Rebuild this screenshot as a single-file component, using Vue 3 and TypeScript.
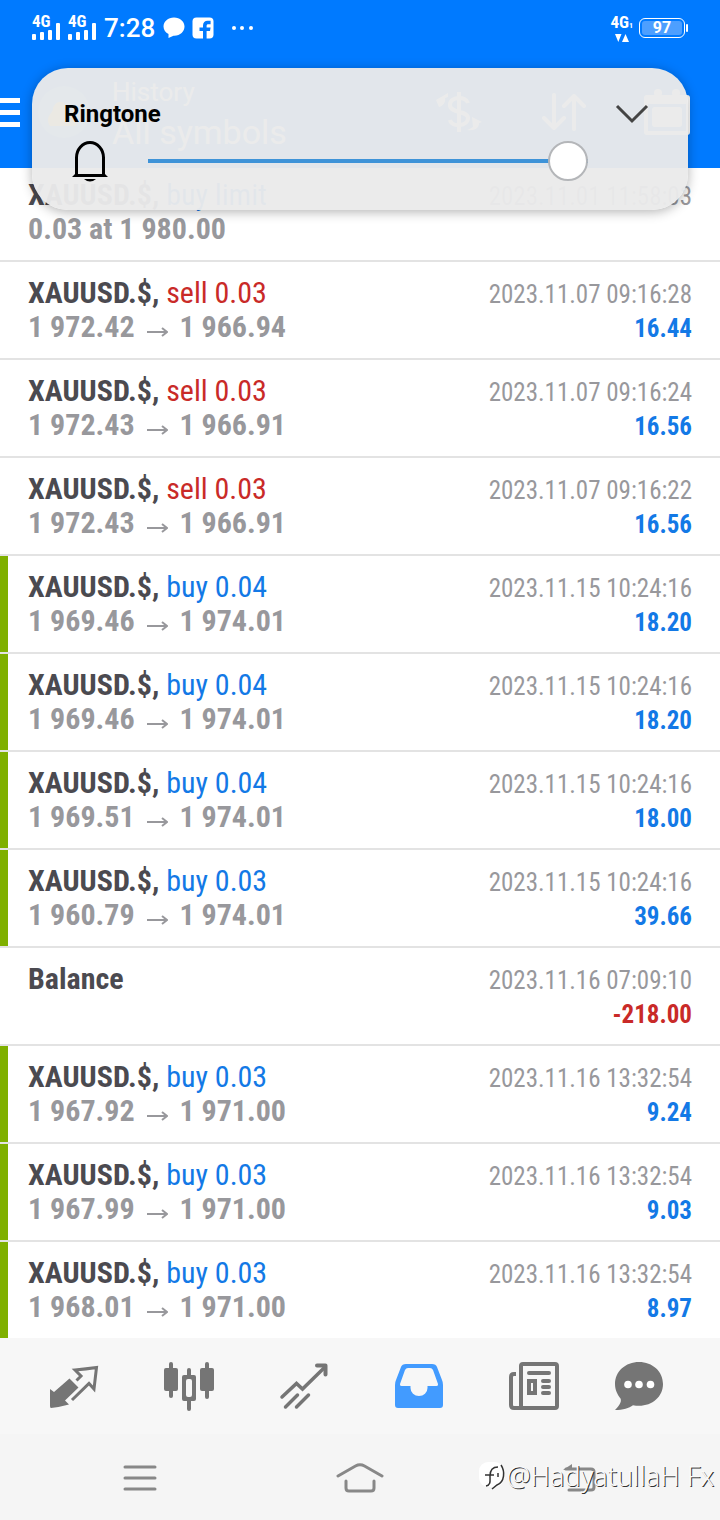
<script setup lang="ts">
import { ref } from 'vue'

interface Deal {
  symbol: string
  side?: 'buy' | 'sell'
  action?: string
  open?: string
  close?: string
  note?: string
  time: string
  profit?: string
  marked?: boolean
}

const volume = ref<number>(100)

function trade(side: 'buy' | 'sell', lots: string, open: string, close: string, time: string, profit: string): Deal {
  return { symbol: 'XAUUSD.$,', side, action: `${side} ${lots}`, open, close, time, profit, marked: side === 'buy' }
}

const deals: Deal[] = [
  { symbol: 'XAUUSD.$,', side: 'buy', action: 'buy limit', note: '0.03 at 1 980.00', time: '2023.11.01 11:58:03' },
  trade('sell', '0.03', '1 972.42', '1 966.94', '2023.11.07 09:16:28', '16.44'),
  trade('sell', '0.03', '1 972.43', '1 966.91', '2023.11.07 09:16:24', '16.56'),
  trade('sell', '0.03', '1 972.43', '1 966.91', '2023.11.07 09:16:22', '16.56'),
  trade('buy', '0.04', '1 969.46', '1 974.01', '2023.11.15 10:24:16', '18.20'),
  trade('buy', '0.04', '1 969.46', '1 974.01', '2023.11.15 10:24:16', '18.20'),
  trade('buy', '0.04', '1 969.51', '1 974.01', '2023.11.15 10:24:16', '18.00'),
  trade('buy', '0.03', '1 960.79', '1 974.01', '2023.11.15 10:24:16', '39.66'),
  { symbol: 'Balance', time: '2023.11.16 07:09:10', profit: '-218.00' },
  trade('buy', '0.03', '1 967.92', '1 971.00', '2023.11.16 13:32:54', '9.24'),
  trade('buy', '0.03', '1 967.99', '1 971.00', '2023.11.16 13:32:54', '9.03'),
  trade('buy', '0.03', '1 968.01', '1 971.00', '2023.11.16 13:32:54', '8.97'),
]
</script>

<template>
  <div class="screen">
    <header class="top">
      <div class="status">
        <div v-for="n in 2" :key="n" class="signal">
          <span class="net">4G</span>
          <svg width="28" height="18" viewBox="0 0 28 18" fill="#fff" aria-hidden="true">
            <rect x="0" y="12" width="4" height="6" rx="1" /><rect x="8" y="10" width="4" height="8" rx="1" />
            <rect x="16" y="8" width="4" height="10" rx="1" /><rect x="24" y="1" width="4" height="17" rx="1" />
          </svg>
        </div>
        <span class="clock">7:28</span>
        <svg class="chat" width="22" height="22" viewBox="0 0 22 22" fill="#fff" aria-hidden="true">
          <path d="M11 .5C5 .5.5 4.500.5 9.600c0 3.300 2 6 5 7.500L5.500 21l5-2.300c6.500.4 11-3.800 11-9.100C21.500 4.500 17 .5 11 .5z" />
        </svg>
        <svg class="fb" width="22" height="22" viewBox="0 0 22 22" aria-hidden="true">
          <rect x=".5" y=".5" width="21" height="21" rx="4" fill="#fff" />
          <path d="M11 22V14H7.500v-3.600H11V8.600c0-3.300 1.800-4.800 4.600-4.800h3v3.500h-2.300c-1.200 0-1.700.5-1.700 1.600v1.500h4L18 14h-3.400v8z" fill="#007aff" />
        </svg>
        <svg width="24" height="6" viewBox="0 0 24 6" fill="#fff" aria-hidden="true">
          <circle cx="4" cy="3" r="2" /><circle cx="12" cy="3" r="2" /><circle cx="21" cy="3" r="2" />
        </svg>
        <div class="data">
          <span class="net">4G<small>1</small></span>
          <svg width="16" height="8" viewBox="0 0 16 8" fill="#fff" aria-hidden="true"><path d="M1 0h6.500L4.300 8zM8 8h7L11.500 0z" /></svg>
        </div>
        <div class="battery"><span>97</span></div>
      </div>

      <div class="bar">
        <button class="menu" aria-label="Menu">
          <svg width="20" height="30" viewBox="0 0 20 30" fill="#fff"><path d="M0 1h20v5H0zM0 13h20v5H0zM0 25h20v5H0z" /></svg>
        </button>
        <svg class="coins" width="56" height="56" viewBox="0 0 56 56" aria-hidden="true">
          <circle cx="28" cy="28" r="26" fill="#3aa0f0" />
          <path d="M14 42c-6-10 4-13 3-18 3-8 10-8 13-2 2 6 12 10 10 20z" fill="#ffc928" />
        </svg>
        <div class="titles">
          <p>History</p>
          <h1>All symbols</h1>
        </div>
        <button class="tool dollar" aria-label="Currency">
          <svg width="50" height="44" viewBox="0 0 50 44" fill="none" stroke="#fff" stroke-width="4">
            <path d="M34 13c-2-7-18-7-18 2s18 5 18 13-16 10-18 2M25 2v40" />
            <path d="M2 10 14 3v4l-3 1c1 4-2 8-6 9zM48 32l-10-5 1 10c-2 1-3 2-6 3 8 1 12-2 12-7z" fill="#fff" stroke="none" />
          </svg>
        </button>
        <button class="tool sort" aria-label="Sort">
          <svg width="44" height="40" viewBox="0 0 44 40" fill="none" stroke="#fff" stroke-width="4" stroke-linecap="round" stroke-linejoin="round">
            <path d="M12 3v32M2 26l10 10 10-10M32 37V4M22 14 32 4l10 10" />
          </svg>
        </button>
        <button class="tool" aria-label="Period">
          <svg width="46" height="46" viewBox="0 0 46 46">
            <path d="M3 6h40a3 3 0 0 1 3 3v34a3 3 0 0 1-3 3H3a3 3 0 0 1-3-3V9a3 3 0 0 1 3-3zm1 9v27h38V15z" fill="#fff" fill-rule="evenodd" />
            <rect x="8" y="18" width="30" height="20" rx="3" fill="#fff" />
            <circle cx="14" cy="4" r="4" fill="#fff" /><circle cx="32" cy="4" r="4" fill="#fff" />
          </svg>
        </button>
      </div>
    </header>

    <main class="list">
      <article v-for="(d, i) in deals" :key="i" class="deal" :class="{ marked: d.marked }">
        <div class="line">
          <span><b class="symbol">{{ d.symbol }}</b><span v-if="d.action" class="action" :class="d.side">{{ ' ' + d.action }}</span></span>
          <time>{{ d.time }}</time>
        </div>
        <div class="line">
          <span v-if="d.note" class="price">{{ d.note }}</span>
          <span v-else-if="d.open" class="price">{{ d.open }}
            <svg class="arrow" width="21" height="12" viewBox="0 0 21 12" fill="none" stroke="#98989c" stroke-width="2" role="img" aria-label="to"><path d="M0 7h19M15 3l5 4-5 4" /></svg>
            {{ d.close }}</span>
          <span v-else>&nbsp;</span>
          <b v-if="d.profit" class="profit" :class="{ loss: d.profit.startsWith('-') }">{{ d.profit }}</b>
        </div>
      </article>
    </main>

    <nav class="tabs" aria-label="Sections">
      <button aria-label="Quotes">
        <svg width="50" height="50" viewBox="0 0 50 50">
          <path d="M1 28l4 3L20.500 17.500l9 9L16 39.500l4 4Q11 46 2 47q-1 0-1-2z" fill="#757575" />
          <path d="M27.500 19.500l4.500-4.500-6-6Q37 8 47.500 6.500L45 28l-5-5.500L23 39" fill="none" stroke="#757575" stroke-width="3" />
        </svg>
      </button>
      <button aria-label="Charts">
        <svg width="50" height="50" viewBox="0 0 50 50" fill="#757575">
          <rect x="0" y="7" width="14" height="23" rx="2" /><rect x="5" y="1" width="4" height="36" rx="2" />
          <rect x="36" y="7" width="14" height="23" rx="2" /><rect x="41" y="1" width="4" height="37" rx="2" />
          <path d="M20 14h3V9q0-2 2-2t2 2v5h3q2 0 2 2v22q0 2-2 2h-3v8q0 2-2 2t-2-2v-8h-3q-2 0-2-2V16q0-2 2-2zm4 4q-2 0-2 2v14q0 2 2 2h2q2 0 2-2V20q0-2-2-2z" fill-rule="evenodd" />
        </svg>
      </button>
      <button aria-label="Trade">
        <svg width="50" height="50" viewBox="0 0 50 50" fill="none" stroke="#757575" stroke-width="3.500" stroke-linecap="round">
          <path d="M3 36 17.500 22.500l6 5.500L45 7" /><path d="M38 4.500h8.500v9" stroke-width="4" stroke-linejoin="round" />
          <path d="M6.500 46l12-12M17.500 46l12-12" />
        </svg>
      </button>
      <button class="active" aria-label="History" aria-current="page">
        <svg width="48" height="44" viewBox="0 0 48 44" fill="#429bff">
          <path d="M11 0h26q4 0 5 3l5 13q1 2 1 5v20q0 3-3 3H3q-3 0-3-3V21q0-3 1-5L6 3q1-3 5-3zm2 4q-2 0-3 2L5 20q-.5 2 1.500 2H15.500v2a8.500 8 0 0 0 17 0v-2H41.500q2 0 1.500-2L38 6q-1-2-3-2z" fill-rule="evenodd" />
        </svg>
      </button>
      <button aria-label="News">
        <svg width="50" height="50" viewBox="0 0 50 50" fill="none" stroke="#757575" stroke-width="4">
          <rect x="12" y="3" width="36" height="44" rx="2" />
          <path d="M7 13H5q-3 0-3 3v28q0 3 3 3h9" />
          <path d="M20 12h20M34 20h6M34 26h6M34 32h6" stroke-linecap="round" />
          <rect x="20" y="20" width="6" height="12" />
        </svg>
      </button>
      <button aria-label="Messages">
        <svg width="48" height="50" viewBox="0 0 48 50">
          <path d="M24 1C10.500 1 0 10.500 0 23c0 6 2.500 10.500 5.500 14.500C7 41 4 45 0 49c8 0 14-2 18-4.800 2 .5 4 .6 6 .6 13.500 0 24-9.300 24-21.800S37.500 1 24 1z" fill="#757575" />
          <g fill="#fff"><circle cx="13" cy="23.500" r="3.800" /><circle cx="24" cy="23.500" r="3.800" /><circle cx="35.500" cy="23.500" r="3.800" /></g>
        </svg>
      </button>
    </nav>

    <footer class="system">
      <button aria-label="Recent apps">
        <svg width="34" height="28" viewBox="0 0 34 28" stroke="#888" stroke-width="3" stroke-linecap="round"><path d="M2 4h30M2 15h30M2 26h30" /></svg>
      </button>
      <button aria-label="Home">
        <svg width="48" height="32" viewBox="0 0 48 32" fill="none" stroke="#888" stroke-width="3" stroke-linecap="round">
          <path d="M2 15 19.500 5Q24 2.500 28.500 5L46 15" /><path d="M10 20v7q0 3 3 3h22q3 0 3-3v-7" />
        </svg>
      </button>
      <button aria-label="Back">
        <svg width="40" height="32" viewBox="0 0 40 32" fill="none" stroke="#888" stroke-width="3" stroke-linecap="round">
          <path d="M6 8h25q3 0 3 3v15q0 3-3 3H9" /><path d="M12 3v6H3z" fill="#888" stroke="none" />
        </svg>
      </button>
      <div class="credit">
        <svg width="28" height="30" viewBox="0 0 28 30" aria-hidden="true">
          <rect x="0" y="1" width="25" height="25" rx="9" fill="#fff" />
          <path d="M7 25c5-1 4-5 4-10 0-6 2-9 8-9M6 14h9M19 12v4" fill="none" stroke="#333" stroke-width="1.500" />
          <path d="M22 4c4 6 4 17-4 20l-5 4" fill="none" stroke="#333" stroke-width="1.500" />
        </svg>
        <span>@HadyatullaH Fx</span>
      </div>
    </footer>

    <section class="panel">
      <div class="panel-head">
        <label for="ringtone">Ringtone</label>
        <button aria-label="Expand">
          <svg width="34" height="22" viewBox="0 0 34 22" fill="none" stroke="#444" stroke-width="3"><path d="M2 3l15 15L32 3" /></svg>
        </button>
      </div>
      <div class="panel-body">
        <svg width="36" height="42" viewBox="0 0 36 42" aria-hidden="true">
          <path d="M4.500 35V17.500a13.500 15 0 0 1 27 0V35" fill="none" stroke="#000" stroke-width="3" />
          <path d="M0 37l3-3h30l3 3zM12 39h12q-6 5-12 0z" />
        </svg>
        <input id="ringtone" v-model.number="volume" type="range" min="0" max="100" />
      </div>
    </section>
  </div>
</template>

<style>
body {
  background: #f6f6f6;
}
</style>

<style scoped>
.screen {
  position: relative;
  display: flex;
  flex-direction: column;
  min-height: 100vh;
  background: #f6f6f6;
  font-family: "Roboto Condensed", "Liberation Sans Narrow", Roboto, sans-serif;
}
button {
  display: grid;
  place-items: center;
  padding: 0;
  border: 0;
  background: none;
}
svg {
  display: block;
  flex: none;
}
.top {
  background: #007aff;
  color: #fff;
}
.status {
  display: flex;
  align-items: center;
  height: 56px;
  padding: 0 35px 0 32px;
  font-family: Roboto, sans-serif;
  font-weight: 500;
}
.signal {
  position: relative;
  padding-top: 6px;
  margin-right: 8px;
}
.net {
  font-family: "Roboto Condensed", Roboto, sans-serif;
  font-size: 17px;
  font-weight: 700;
  line-height: 16px;
}
.signal .net {
  position: absolute;
  top: -3px;
  left: 0;
}
.clock {
  font-size: 26px;
}
.chat {
  margin-left: 8px;
}
.fb {
  margin: 0 16px 0 7px;
}
.data {
  display: flex;
  flex-direction: column;
  align-items: center;
  margin-left: auto;
  margin-right: 6px;
}
.data small {
  font-size: 8px;
}
.battery {
  position: relative;
  box-sizing: border-box;
  width: 46px;
  height: 20px;
  padding: 2px;
  border: 1px solid #fff;
  border-radius: 6px;
}
.battery span {
  display: block;
  border-radius: 3px;
  background: #4d9fff;
  font-size: 16px;
  font-weight: 700;
  line-height: 14px;
  text-align: center;
}
.battery::after {
  content: "";
  position: absolute;
  top: 5px;
  right: -4px;
  width: 2px;
  height: 8px;
  border-radius: 1px;
  background: #fff;
}
.bar {
  display: flex;
  align-items: center;
  height: 112px;
  padding-right: 30px;
  font-family: Roboto, sans-serif;
}
.coins {
  margin: 0 20px 0 16px;
}
.titles {
  flex: 1;
}
.titles p {
  margin: 0;
  font-size: 26px;
  line-height: 40px;
}
.titles h1 {
  margin: 0;
  font-size: 34px;
  font-weight: 400;
  line-height: 40px;
}
.dollar {
  margin-right: 58px;
}
.sort {
  margin-right: 58px;
}
.list {
  background: #fff;
}
.deal {
  box-sizing: border-box;
  padding: 14px 28px;
  border-bottom: 2px solid #e3e3e3;
}
.deal:first-child {
  padding-top: 10px;
}
.deal:last-child {
  border-bottom: 0;
}
.marked {
  background: linear-gradient(#7fb000, #7fb000) left / 8px 100% no-repeat padding-box;
}
.line {
  display: flex;
  justify-content: space-between;
  align-items: baseline;
  height: 34px;
  font-size: 30px;
  line-height: 34px;
  white-space: nowrap;
}
.symbol {
  color: #4b4a50;
}
.action {
  white-space: pre;
}
.buy {
  color: #1379e6;
}
.sell {
  color: #c92a28;
}
.price {
  color: #98989c;
  font-weight: 700;
}
.arrow {
  display: inline-block;
  margin: 0 5px;
}
time {
  color: #98989c;
  font-size: 25px;
}
.profit {
  color: #1379e6;
  font-size: 25px;
}
.profit.loss {
  color: #c92a28;
}
.tabs {
  display: grid;
  grid-template-columns: repeat(5, 115fr) 96fr;
  height: 96px;
  padding: 0 33px 0 16px;
  background: #f7f7f7;
}
.system {
  position: relative;
  display: grid;
  grid-template-columns: repeat(3, 1fr);
  height: 86px;
  padding: 0 30px;
  background: #f5f5f5;
}
.credit {
  position: absolute;
  right: 6px;
  top: 26px;
  display: flex;
  align-items: center;
  color: #fafafa;
  font-family: "Noto Sans", sans-serif;
  font-size: 27px;
  font-weight: 300;
  line-height: 32px;
  text-shadow: 1px 1px 0 #333;
}
.panel {
  position: absolute;
  top: 68px;
  left: 32px;
  right: 32px;
  box-sizing: border-box;
  height: 142px;
  padding: 28px 32px 0;
  border-radius: 36px;
  background: rgba(234, 234, 234, 0.965);
  box-shadow: 0 2px 12px rgba(0, 0, 0, 0.3);
  font-family: Roboto, sans-serif;
}
.panel-head {
  display: flex;
  justify-content: space-between;
  align-items: center;
  height: 36px;
  padding-right: 7px;
}
.panel-head label {
  color: #000;
  font-size: 24px;
  font-weight: 700;
}
.panel-body {
  display: flex;
  align-items: center;
  height: 58px;
  padding: 0 68px 0 8px;
}
input {
  appearance: none;
  flex: 1;
  min-width: 0;
  height: 40px;
  margin: 0 0 0 40px;
  background: linear-gradient(#3e93d8, #3e93d8) center / 100% 4px no-repeat;
}
input::-webkit-slider-thumb {
  appearance: none;
  box-sizing: border-box;
  width: 40px;
  height: 40px;
  border: 2px solid #b4b6b9;
  border-radius: 50%;
  background: #fff;
}
</style>
